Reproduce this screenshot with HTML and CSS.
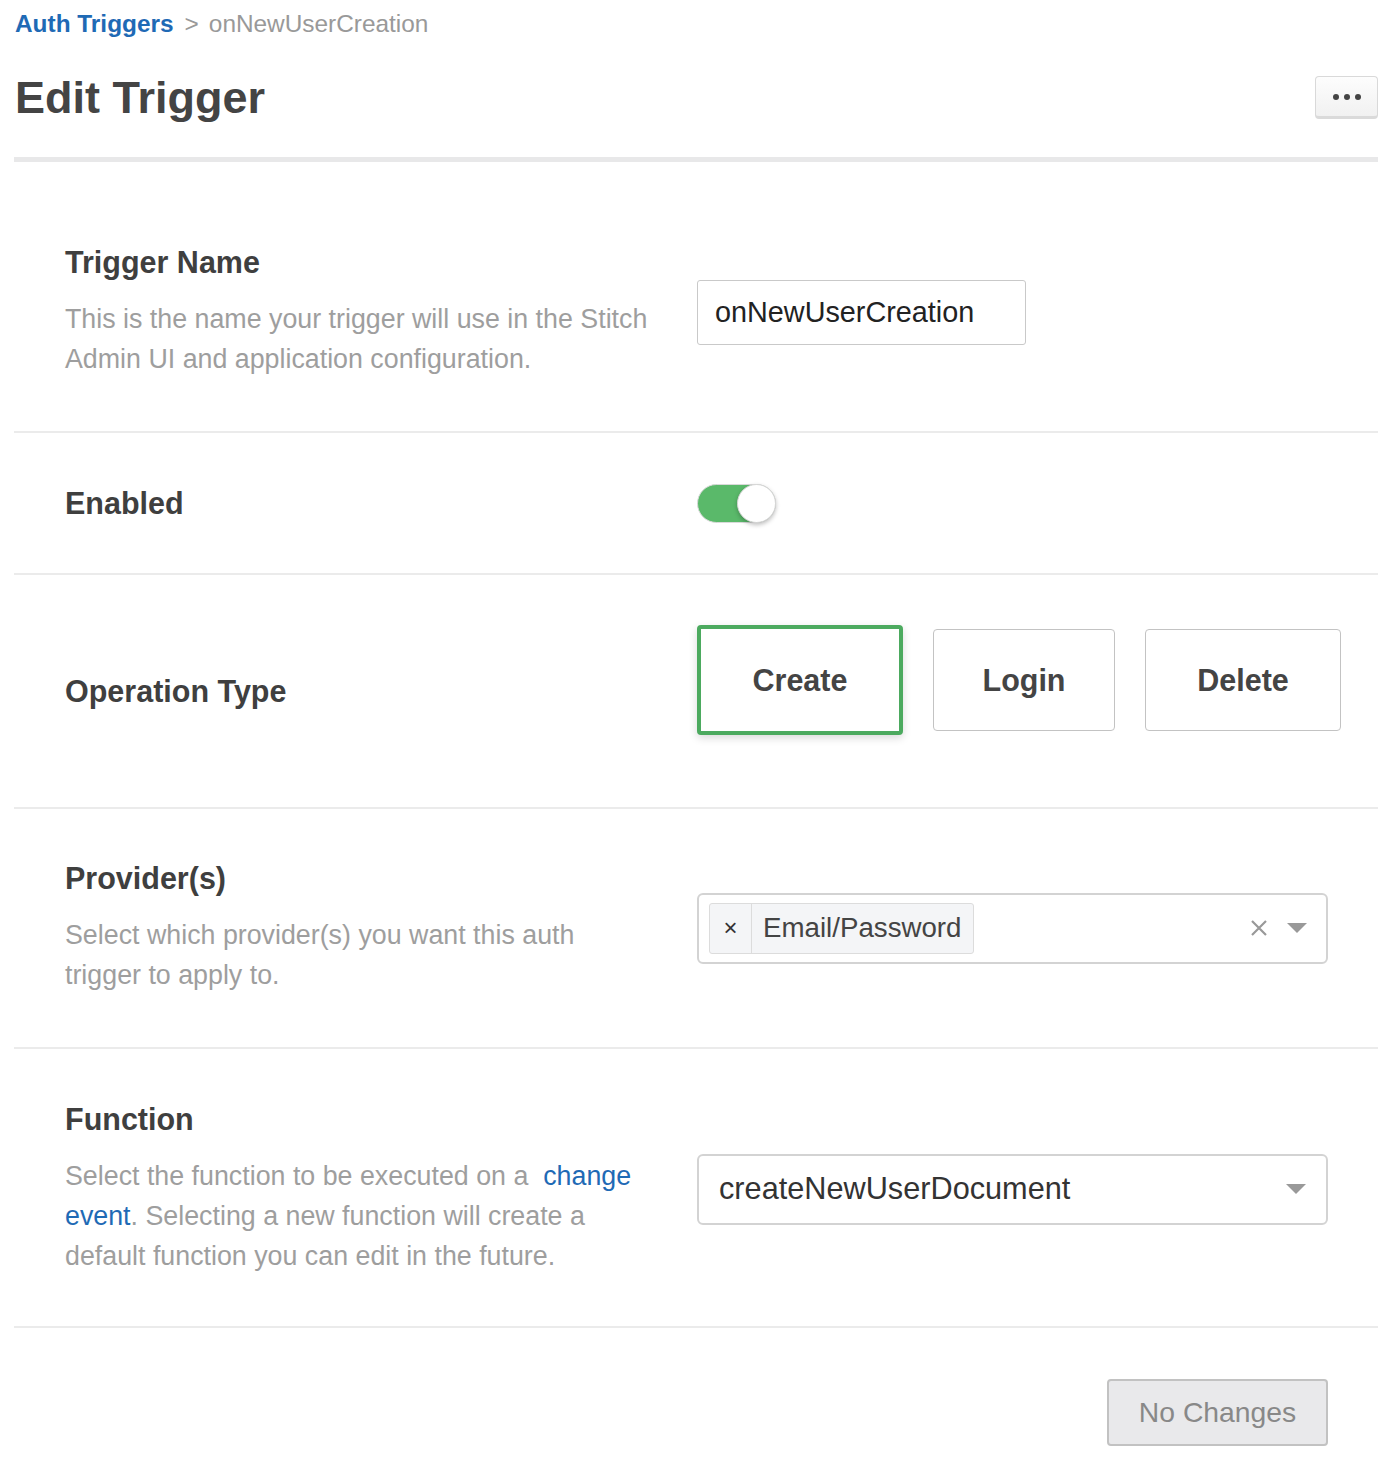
FILE: index.html
```html
<!DOCTYPE html>
<html>
<head>
<meta charset="utf-8">
<link rel="stylesheet" href="styles.css">
</head>
<body>
<div class="page">
  <div class="breadcrumb"><a class="crumb-link">Auth Triggers</a><span class="crumb-sep">&gt;</span><span class="crumb-current">onNewUserCreation</span></div>
  <div class="header">
    <h1 class="title">Edit Trigger</h1>
    <button class="more-btn"><span class="dot"></span><span class="dot"></span><span class="dot"></span></button>
  </div>
  <div class="form">
    <section class="row row-name">
      <div class="info">
        <div class="label">Trigger Name</div>
        <p class="desc">This is the name your trigger will use in the Stitch<br>Admin UI and application configuration.</p>
      </div>
      <div class="control">
        <div class="text-input">onNewUserCreation</div>
      </div>
    </section>
    <section class="row row-enabled">
      <div class="info"><div class="label">Enabled</div></div>
      <div class="control">
        <div class="toggle"><span class="knob"></span></div>
      </div>
    </section>
    <section class="row row-op">
      <div class="info"><div class="label">Operation Type</div></div>
      <div class="control op-buttons">
        <button class="op-btn op-create selected">Create</button>
        <button class="op-btn op-login">Login</button>
        <button class="op-btn op-delete">Delete</button>
      </div>
    </section>
    <section class="row row-provider">
      <div class="info">
        <div class="label">Provider(s)</div>
        <p class="desc">Select which provider(s) you want this auth<br>trigger to apply to.</p>
      </div>
      <div class="control">
        <div class="select multi">
          <div class="tag"><span class="tag-x">×</span><span class="tag-label">Email/Password</span></div>
          <div class="select-icons">
            <svg class="clear-x" width="18" height="18" viewBox="0 0 18 18"><path d="M2 2 L16 16 M16 2 L2 16" stroke="#999" stroke-width="2.2" fill="none"/></svg>
            <span class="caret"></span>
          </div>
        </div>
      </div>
    </section>
    <section class="row row-function">
      <div class="info">
        <div class="label">Function</div>
        <p class="desc">Select the function to be executed on a&nbsp; <a class="link">change</a><br><a class="link">event</a>. Selecting a new function will create a<br>default function you can edit in the future.</p>
      </div>
      <div class="control">
        <div class="select single">
          <span class="select-value">createNewUserDocument</span>
          <span class="caret"></span>
        </div>
      </div>
    </section>
  </div>
  <div class="footer">
    <button class="save-btn">No Changes</button>
  </div>
</div>
</body>
</html>
```
FILE: styles.css
```css
* { box-sizing: border-box; }
html, body { margin: 0; padding: 0; background: #fff; }
body { font-family: "Liberation Sans", Arial, sans-serif; color: #444; }
.page { padding: 0 14px 0 14px; width: 1392px; }

.breadcrumb { font-size: 24.4px; line-height: 24px; padding-top: 12px; display: flex; align-items: baseline; }
.crumb-link { color: #1f6ab5; font-weight: bold; padding-left: 1px; }
.crumb-sep { color: #999; margin: 0 10px 0 11px; }
.crumb-current { color: #999; }

.header { display: flex; align-items: center; justify-content: space-between; border-bottom: 5px solid #e8e8e9; height: 126px; padding-top: 4px; padding-bottom: 2px; }
.title { margin: 0; font-size: 45px; font-weight: bold; color: #444; padding-left: 1px; }
.more-btn { width: 63px; height: 43px; border: 1px solid #d9d9d9; border-bottom: 3px solid #dadada; border-radius: 4px; background: linear-gradient(#fdfdfd, #f1f1f1); display: flex; align-items: center; justify-content: center; gap: 5px; padding: 0; }
.dot { width: 6px; height: 6px; border-radius: 50%; background: #444; }

.form { padding-top: 29px; }
.row { display: flex; align-items: center; border-bottom: 2px solid #ebebeb; padding: 0 0 0 51px; }
.info { width: 632px; flex: none; }
.control { flex: none; width: 630px; }
.label { font-size: 30.5px; font-weight: bold; color: #3f3f3f; line-height: 34px; }
.desc { margin: 20px 0 0 0; font-size: 26.8px; line-height: 40px; color: #9e9e9e; white-space: nowrap; }
.link { color: #1f6ab5; }

.row-name { padding-top: 54px; padding-bottom: 52px; }
.row-enabled { height: 142px; }
.row-op { height: 234px; }
.row-provider { padding-top: 52px; padding-bottom: 52px; }
.row-function { padding-top: 53px; padding-bottom: 50px; }

.text-input { width: 329px; height: 65px; border: 1px solid #c9c9c9; border-radius: 3px; font-size: 28.8px; color: #222; padding: 0 17px; display: flex; align-items: center; }

.toggle { width: 79px; height: 39px; border-radius: 20px; background: #5ab96a; border: 1px solid #d9d9d9; position: relative; }
.knob { position: absolute; right: -1px; top: -1px; width: 39px; height: 39px; border-radius: 50%; background: #fff; border: 1px solid #d6d6d6; box-shadow: 0 2px 4px rgba(0,0,0,0.25); }

.op-buttons { display: flex; align-items: center; gap: 30px; margin-bottom: 22px; }
.op-btn { flex: none; height: 102px; padding: 0; border: 1px solid #c3c3c3; border-radius: 4px; background: #fff; font-family: "Liberation Sans", Arial, sans-serif; font-size: 30.5px; font-weight: bold; color: #444; }
.op-btn.selected { height: 110px; border: 4px solid #4caa5f; box-shadow: 0 3px 8px rgba(0,0,0,0.15); }
.op-create { width: 206px; }
.op-login { width: 182px; }
.op-delete { width: 196px; }

.select { width: 631px; height: 71px; border: 2px solid #d3d3d3; border-radius: 6px; display: flex; align-items: center; }
.multi { padding: 0 10px; }
.tag { display: flex; align-items: stretch; height: 51px; border: 1px solid #dcdcdc; border-radius: 3px; background: #f4f5f7; }
.tag-x { width: 42px; display: flex; align-items: center; justify-content: center; font-size: 24px; color: #333; border-right: 1px solid #dcdcdc; }
.tag-label { padding: 0 11px; display: flex; align-items: center; font-size: 27.7px; color: #444; }
.select-icons { margin-left: auto; display: flex; align-items: center; gap: 19px; padding-right: 9px; }
.clear-x { display: block; }
.caret { width: 0; height: 0; border-left: 10px solid transparent; border-right: 10px solid transparent; border-top: 10px solid #999; }
.single { padding: 0 20px 0 20px; justify-content: space-between; }
.select-value { font-size: 30.7px; color: #333; }

.footer { display: flex; justify-content: flex-end; padding: 51px 50px 0 0; }
.save-btn { width: 221px; height: 67px; border: 2px solid #c2c2c2; border-radius: 4px; background: #e9e9eb; font-family: "Liberation Sans", Arial, sans-serif; font-size: 28.3px; color: #888; }
```
